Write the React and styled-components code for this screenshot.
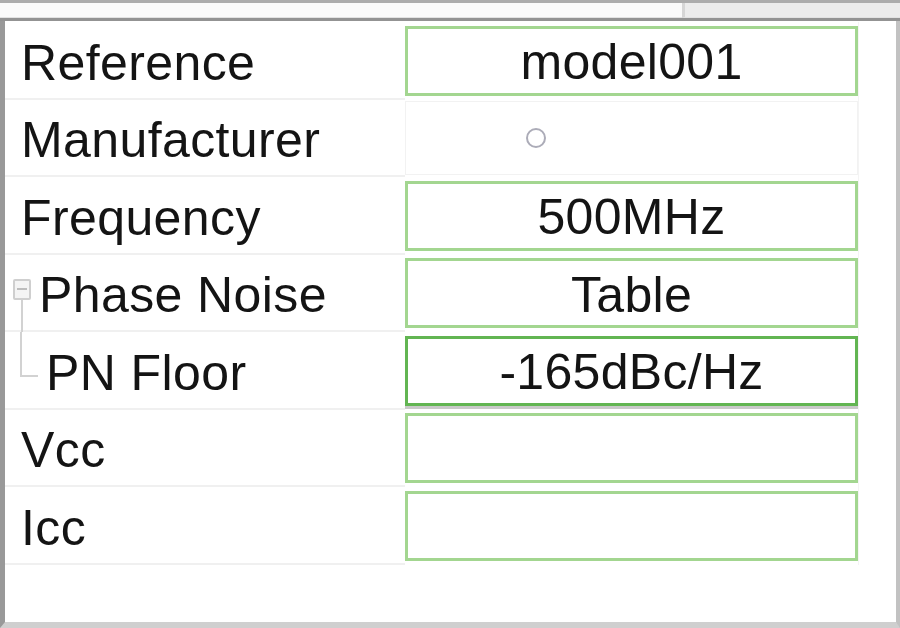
import React from 'react'
import styled, { createGlobalStyle } from 'styled-components'

const GlobalStyle = createGlobalStyle`
  html, body { margin: 0; padding: 0; background: #fff; }
  body { font-family: 'Liberation Sans', Arial, sans-serif; }
`

const Window = styled.div`
  width: 900px;
  height: 628px;
  display: flex;
  flex-direction: column;
  box-sizing: border-box;
  overflow: hidden;
`

const TopStrip = styled.div`
  display: flex;
  border-top: 3px solid #acacac;
  border-bottom: 3px solid #939393;
  box-sizing: border-box;
  flex: none;
  height: 21px;
`

const StripPart = styled.div`
  flex: ${p => (p.$grow ? 1 : 'none')};
  width: ${p => (p.$grow ? 'auto' : '215px')};
  background: ${p => (p.$grow ? '#fafafa' : '#ececec')};
  border-left: ${p => (p.$grow ? 'none' : '3px solid #d6d6d6')};
  border-bottom: 1px solid #e2e2e2;
`

const Panel = styled.div`
  flex: 1;
  background: #fff;
  border-left: 5px solid #999;
  border-right: 4px solid #c2c2c2;
  border-bottom: 6px solid #cfcfcf;
  padding-top: 1px;
  display: flex;
  flex-direction: column;
`

const Row = styled.div`
  height: 77.5px;
  display: grid;
  grid-template-columns: 400px 453px 1fr;
  align-items: center;
`

const Label = styled.div`
  align-self: stretch;
  display: flex;
  align-items: center;
  padding-left: ${p => p.$indent || 16}px;
  padding-top: 3px;
  box-sizing: border-box;
  border-bottom: 2px solid #f0f0f0;
  font-size: 50px;
  color: #141414;
  letter-spacing: 0.4px;
  white-space: nowrap;
`

const LabelText = styled.span`
  padding-top: 3px;
`

const Value = styled.div`
  height: 70px;
  box-sizing: border-box;
  border: 3px solid ${p => (p.$selected ? '#62b552' : '#a3d690')};
  box-shadow: ${p => (p.$selected ? '0 3px 0 #c9c9c9' : 'none')};
  display: flex;
  align-items: center;
  justify-content: center;
  padding-top: 3px;
  font-size: 50px;
  letter-spacing: 0.3px;
  color: #141414;
`

const EmptyValue = styled.div`
  height: 74px;
  box-sizing: border-box;
  border: 1px solid #f2f2f2;
  display: flex;
  align-items: center;
  padding-left: 119px;
`

const Gutter = styled.div`
  align-self: stretch;
  border-left: 1px solid #f4f4f4;
`

const Expander = styled.div`
  align-self: stretch;
  width: 22px;
  display: flex;
  flex-direction: column;
  align-items: center;
  padding-top: 24px;
  margin-top: -3px;
  margin-bottom: -2px;
  margin-right: 6px;
`

const ExpanderBox = styled.div`
  width: 14px;
  height: 17px;
  border: 2px solid #cfcfcf;
  border-radius: 2px;
  background: #f4f4f4;
  display: flex;
  align-items: center;
  justify-content: center;
  flex: none;
  &::after {
    content: '';
    width: 10px;
    height: 2px;
    background: #bdbdbd;
  }
`

const TreeLine = styled.div`
  flex: 1;
  width: 0;
  border-left: 2px solid #d2d2d2;
`

const Elbow = styled.div`
  align-self: flex-start;
  width: 18px;
  height: 45px;
  margin-left: 9px;
  margin-right: 8px;
  box-sizing: border-box;
  border-left: 2px solid #d2d2d2;
  border-bottom: 2px solid #d2d2d2;
  margin-top: -3px;
`

const rows = [
  { label: 'Reference', value: 'model001' },
  { label: 'Manufacturer', empty: true },
  { label: 'Frequency', value: '500MHz' },
  { label: 'Phase Noise', value: 'Table', parent: true },
  { label: 'PN Floor', value: '-165dBc/Hz', child: true, selected: true },
  { label: 'Vcc', value: '' },
  { label: 'Icc', value: '' },
]

const Radio = () => (
  <svg width="22" height="22" viewBox="0 0 22 22">
    <circle cx="11" cy="11" r="9" fill="#fff" stroke="#acacb8" strokeWidth="2" />
  </svg>
)

export default function App() {
  return (
    <Window>
      <GlobalStyle />
      <TopStrip>
        <StripPart $grow />
        <StripPart />
      </TopStrip>
      <Panel>
        {rows.map(r => (
          <Row key={r.label}>
            <Label $indent={r.parent || r.child ? 6 : 16}>
              {r.parent && (
                <Expander>
                  <ExpanderBox />
                  <TreeLine />
                </Expander>
              )}
              {r.child && <Elbow />}
              <LabelText>{r.label}</LabelText>
            </Label>
            {r.empty ? (
              <EmptyValue>
                <Radio />
              </EmptyValue>
            ) : (
              <Value $selected={r.selected}>{r.value}</Value>
            )}
            <Gutter />
          </Row>
        ))}
      </Panel>
    </Window>
  )
}
